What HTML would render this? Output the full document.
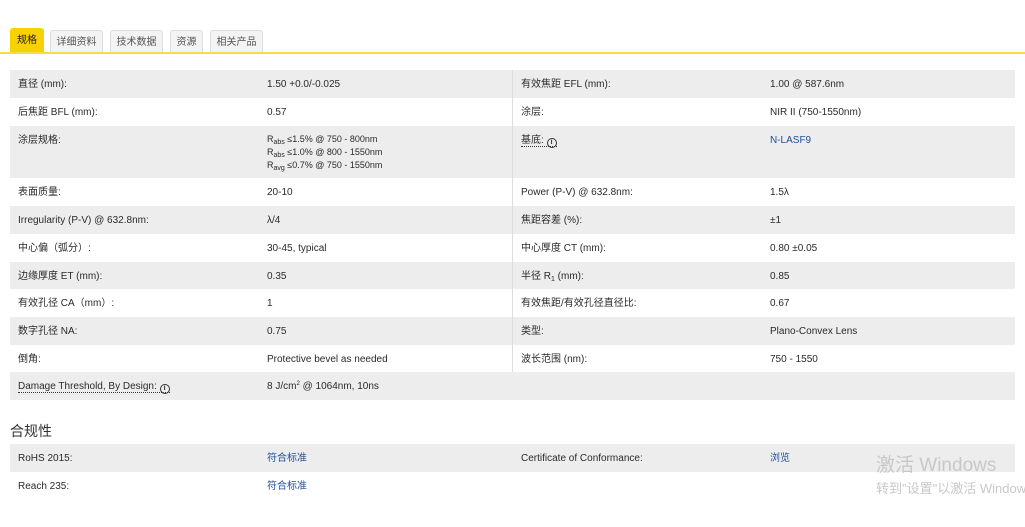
<!DOCTYPE html>
<html><head><meta charset="utf-8">
<style>
*{margin:0;padding:0;box-sizing:border-box}
body{width:1025px;height:527px;background:#fff;font-family:"Liberation Sans","Noto Sans CJK SC",sans-serif;color:#2a2a2a;font-size:10px;position:relative;overflow:hidden}
.tab{position:absolute;top:30px;height:22px;border:1px solid #ddd;border-bottom:none;background:#f3f3f3;color:#555;font-size:10px;line-height:24px;text-align:center;border-radius:3px 3px 0 0}
.tab.a{background:#f7d100;border-color:#f7d100;color:#222;top:28px;height:24px}
.line{position:absolute;left:0;top:52px;width:1025px;height:2px;background:#f5dc4a}
.r{position:absolute;left:10px;width:1005px;height:28px}
.g{background:#ededed}
.c{position:absolute;top:8px;white-space:nowrap;line-height:13px;height:13px}
.blue{color:#1f4f9a}
.div{position:absolute;left:512px;top:70px;width:1px;height:302px;background:#ddd}
sub{font-size:7px;vertical-align:-2px;line-height:0}
sup{font-size:6px;vertical-align:4px;line-height:0}
.dot{border-bottom:1px dotted #333}
.i{display:inline-block;width:10px;height:10px;border:1.5px solid #333;border-radius:50%;font-size:7px;line-height:7px;text-align:center;font-weight:bold;vertical-align:-1px}
.wm{position:absolute;color:#c8c8c8;white-space:nowrap;font-family:"Liberation Sans","Noto Sans CJK SC",sans-serif}
</style></head><body>
<div class="tab a" style="left:10px;width:34px">规格</div>
<div class="tab" style="left:50px;width:53px">详细资料</div>
<div class="tab" style="left:110px;width:53px">技术数据</div>
<div class="tab" style="left:170px;width:33px">资源</div>
<div class="tab" style="left:210px;width:53px">相关产品</div>
<div class="line"></div>

<div class="r g" style="top:70px"><span class="c" style="left:8px">直径 (mm):</span><span class="c" style="left:257px">1.50 +0.0/-0.025</span><span class="c" style="left:511px">有效焦距 EFL (mm):</span><span class="c" style="left:760px">1.00 @ 587.6nm</span></div>
<div class="r" style="top:98px"><span class="c" style="left:8px">后焦距 BFL (mm):</span><span class="c" style="left:257px">0.57</span><span class="c" style="left:511px">涂层:</span><span class="c" style="left:760px">NIR II (750-1550nm)</span></div>
<div class="r g" style="top:126px;height:52px"><span class="c" style="left:8px">涂层规格:</span><span class="c" style="left:257px;top:7px;height:40px;font-size:9px">R<sub>abs</sub> ≤1.5% @ 750 - 800nm<br>R<sub>abs</sub> ≤1.0% @ 800 - 1550nm<br>R<sub>avg</sub> ≤0.7% @ 750 - 1550nm</span><span class="c" style="left:511px"><span class="dot">基底: <span class="i">i</span></span></span><span class="c blue" style="left:760px">N-LASF9</span></div>
<div class="r" style="top:178px"><span class="c" style="left:8px">表面质量:</span><span class="c" style="left:257px">20-10</span><span class="c" style="left:511px">Power (P-V) @ 632.8nm:</span><span class="c" style="left:760px">1.5λ</span></div>
<div class="r g" style="top:206px"><span class="c" style="left:8px">Irregularity (P-V) @ 632.8nm:</span><span class="c" style="left:257px">λ/4</span><span class="c" style="left:511px">焦距容差 (%):</span><span class="c" style="left:760px">±1</span></div>
<div class="r" style="top:234px"><span class="c" style="left:8px">中心偏（弧分）:</span><span class="c" style="left:257px">30-45, typical</span><span class="c" style="left:511px">中心厚度 CT (mm):</span><span class="c" style="left:760px">0.80 ±0.05</span></div>
<div class="r g" style="top:262px;height:27px"><span class="c" style="left:8px">边缘厚度 ET (mm):</span><span class="c" style="left:257px">0.35</span><span class="c" style="left:511px">半径 R<sub>1</sub> (mm):</span><span class="c" style="left:760px">0.85</span></div>
<div class="r" style="top:289px"><span class="c" style="left:8px">有效孔径 CA（mm）:</span><span class="c" style="left:257px">1</span><span class="c" style="left:511px">有效焦距/有效孔径直径比:</span><span class="c" style="left:760px">0.67</span></div>
<div class="r g" style="top:317px"><span class="c" style="left:8px">数字孔径 NA:</span><span class="c" style="left:257px">0.75</span><span class="c" style="left:511px">类型:</span><span class="c" style="left:760px">Plano-Convex Lens</span></div>
<div class="r" style="top:345px;height:27px"><span class="c" style="left:8px">倒角:</span><span class="c" style="left:257px">Protective bevel as needed</span><span class="c" style="left:511px">波长范围 (nm):</span><span class="c" style="left:760px">750 - 1550</span></div>
<div class="r g" style="top:372px"><span class="c" style="left:8px"><span class="dot">Damage Threshold, By Design: <span class="i">i</span></span></span><span class="c" style="left:257px">8 J/cm<sup>2</sup> @ 1064nm, 10ns</span></div>
<div class="div"></div>

<div style="position:absolute;left:10px;top:422px;font-size:14px;color:#333;line-height:18px">合规性</div>
<div class="r g" style="top:444px"><span class="c" style="left:8px">RoHS 2015:</span><span class="c blue" style="left:257px">符合标准</span><span class="c" style="left:511px">Certificate of Conformance:</span><span class="c blue" style="left:760px">浏览</span></div>
<div class="r" style="top:472px"><span class="c" style="left:8px">Reach 235:</span><span class="c blue" style="left:257px">符合标准</span></div>

<div class="wm" style="left:876px;top:454px;font-size:19px;line-height:24px">激活 Windows</div>
<div class="wm" style="left:876px;top:481px;font-size:13px;line-height:16px">转到"设置"以激活 Windows</div>
</body></html>
